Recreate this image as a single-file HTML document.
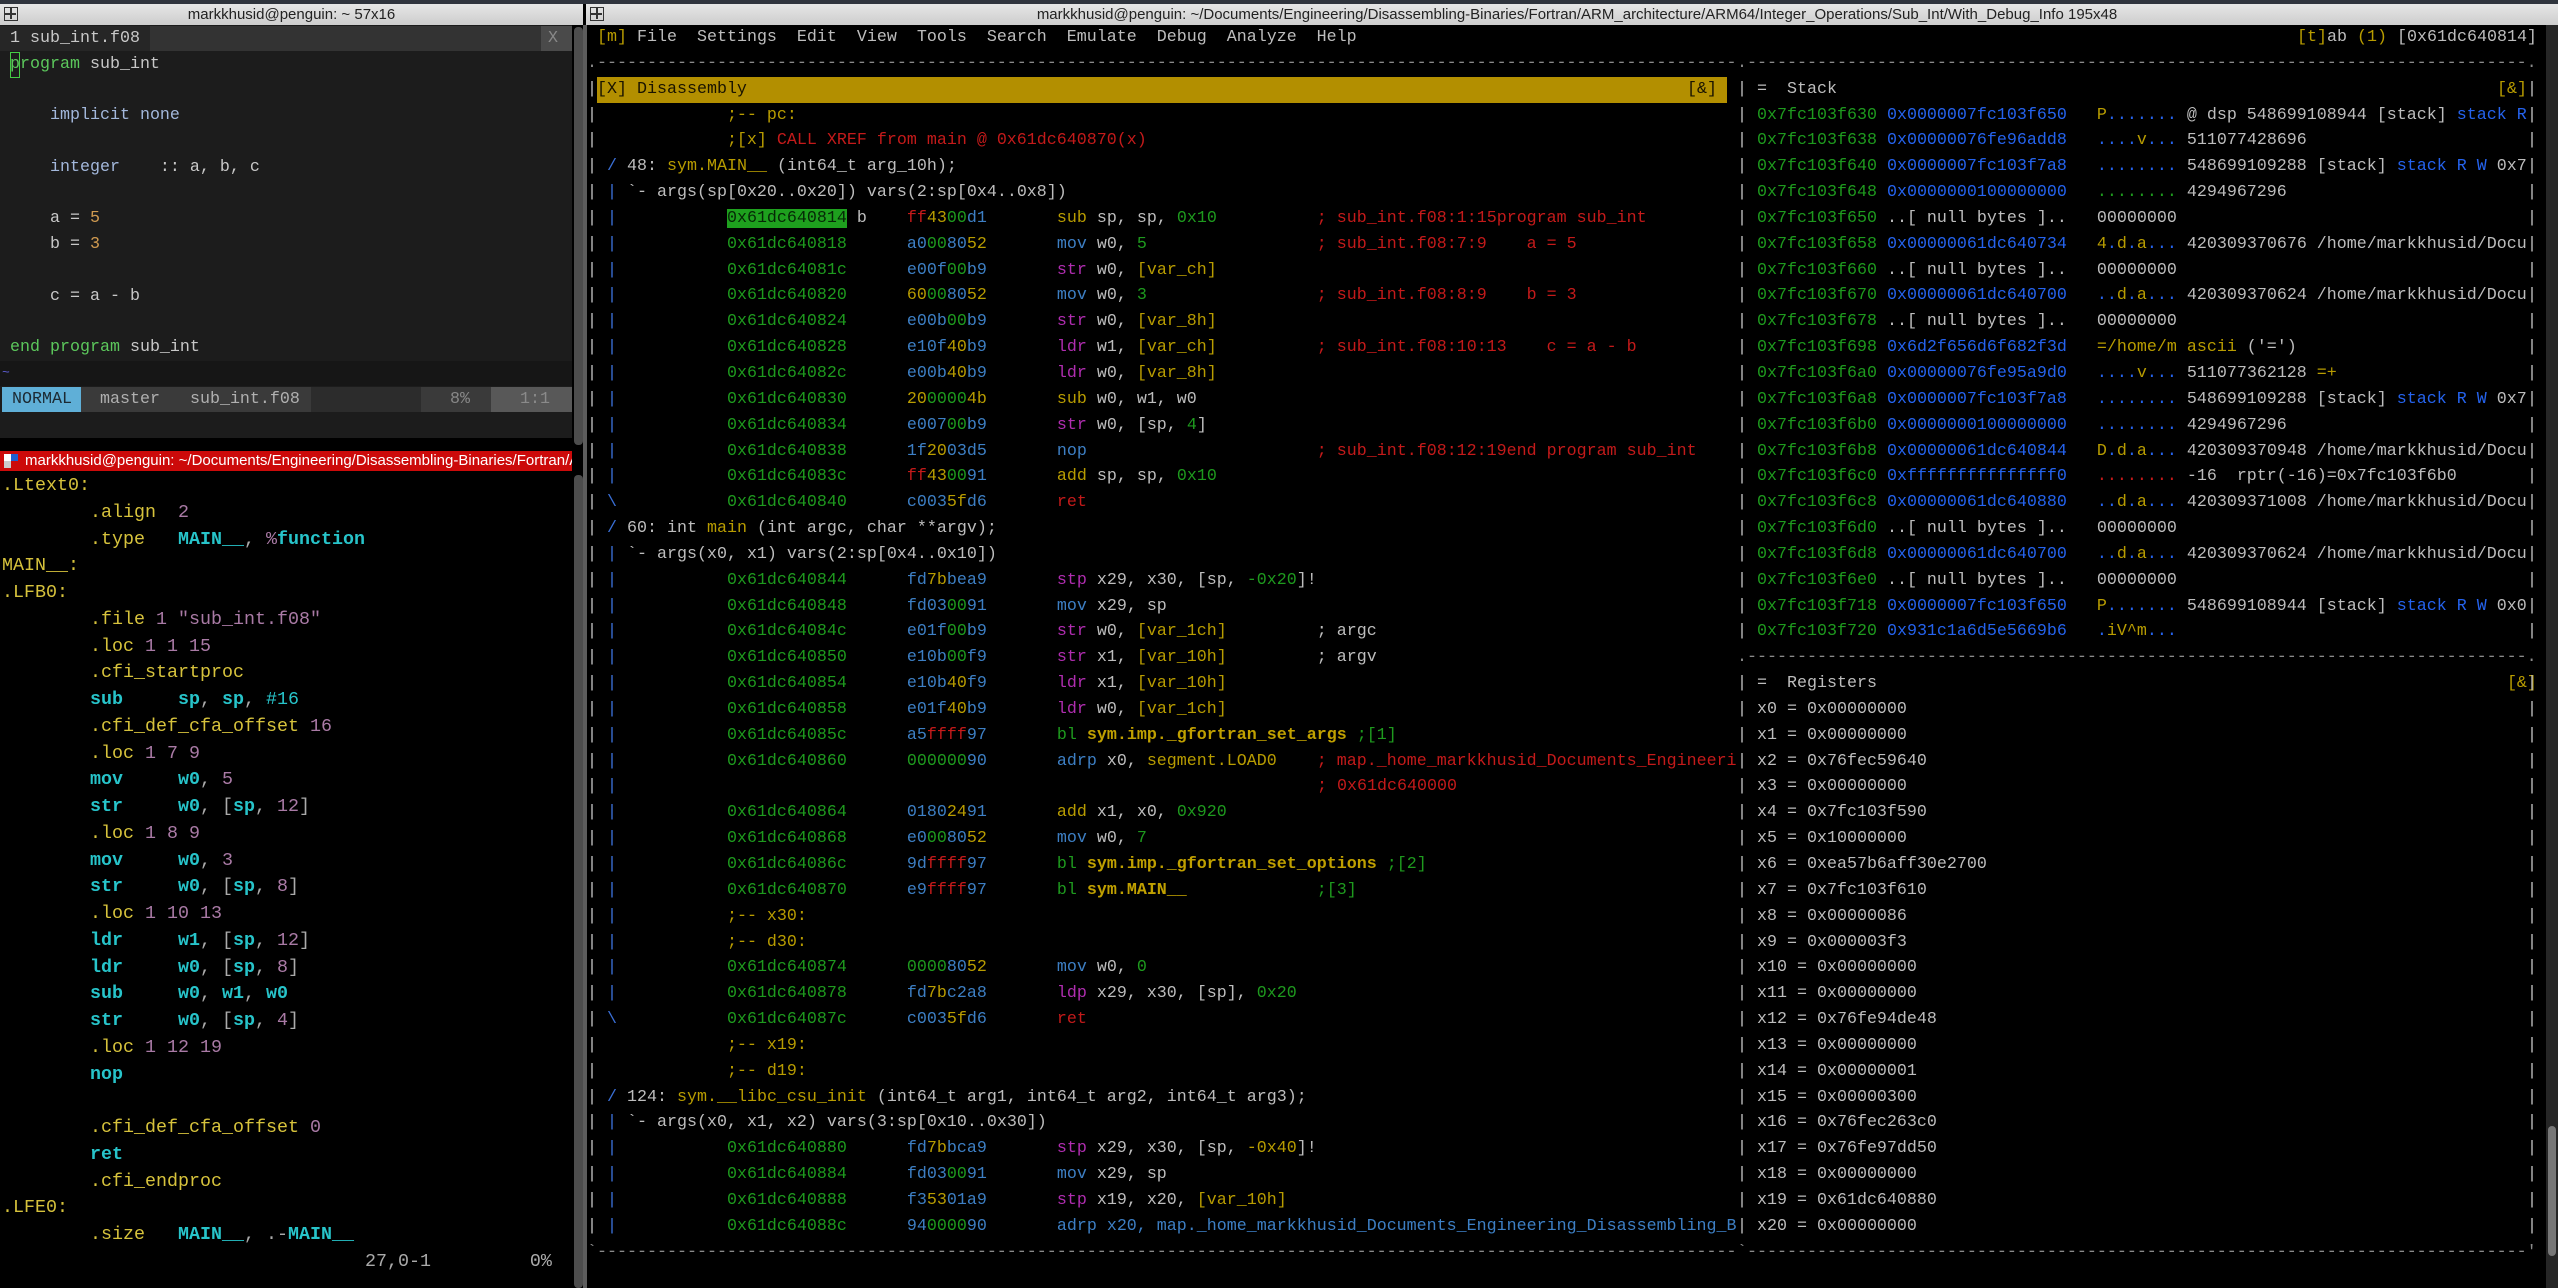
<!DOCTYPE html>
<html><head><meta charset="utf-8">
<style>
*{margin:0;padding:0;box-sizing:border-box}
body{width:2558px;height:1288px;background:#000;position:relative;overflow:hidden;font-family:"Liberation Mono",monospace}
.abs{position:absolute}
pre{position:absolute;white-space:pre;margin:0}
.r{font:16.667px/25.85px "Liberation Mono",monospace;color:#bdbdbd}
.g{color:#1e9a1e}.y{color:#b89c00}.b{color:#3d7fc4}.m{color:#b02db0}.rd{color:#c41a1a}
.bb{color:#2563ee}.i{color:#3a6fd6}.yb{color:#c0a000;font-weight:bold}.dk{color:#8a8a8a}
.hl{background:#1ea01e;color:#062806}
.bar{display:inline-block;width:1130px;background:#b38f00;color:#1a1400;position:relative}
.sp{display:inline-block}
.title{position:absolute;top:4px;height:21px;background:linear-gradient(#e6e6e6,#cdcdcd);font:15px/21px "Liberation Sans",sans-serif;color:#222;text-align:center;overflow:hidden;white-space:nowrap}
.ico{position:absolute;left:4px;top:3px;width:14px;height:14px;border:1.5px solid #333}
.ico:before{content:"";position:absolute;left:5px;top:0;width:1.5px;height:11px;background:#333}
.ico:after{content:"";position:absolute;left:0;top:5px;width:11px;height:1.5px;background:#333}
.v{font:16.667px/25.75px "Liberation Mono",monospace;color:#c8c8c8}
.vg{color:#5cc85c}.vl{color:#a3b8dc}.vo{color:#d09a50}
.a{font:18.33px/26.75px "Liberation Mono",monospace;color:#aaa}
.ay{color:#d6c23c}.ac{color:#27c4ca;font-weight:bold}.ap{color:#a97aa5}
</style></head><body>
<div class="abs" style="left:0;top:0;width:2558px;height:4px;background:#2f343d"></div>
<div class="title" style="left:0;width:583px"><div class="ico"></div>markkhusid@penguin: ~ 57x16</div>
<div class="title" style="left:586px;width:1972px"><div class="ico"></div><span style="padding-left:10px">markkhusid@penguin: ~/Documents/Engineering/Disassembling-Binaries/Fortran/ARM_architecture/ARM64/Integer_Operations/Sub_Int/With_Debug_Info 195x48</span></div>

<!-- left top vim -->
<div class="abs" style="left:0;top:25px;width:572px;height:413px;background:#1c1c1c"></div>
<div class="abs" style="left:0;top:26px;width:572px;height:25px;background:#333"></div>
<div class="abs" style="left:0;top:26px;width:150px;height:25px;background:#262626"></div>
<div class="abs" style="left:541px;top:26px;width:31px;height:25px;background:#4a4a4a"></div>
<div class="abs" style="left:0;top:361px;width:572px;height:25px;background:#161616"></div>
<div class="abs" style="left:2px;top:387px;width:79px;height:25px;background:#5fafd7"></div>
<div class="abs" style="left:81px;top:387px;width:230px;height:25px;background:#3a3a3a"></div>
<div class="abs" style="left:311px;top:387px;width:110px;height:25px;background:#2c2c2c"></div>
<div class="abs" style="left:421px;top:387px;width:70px;height:25px;background:#3a3a3a"></div>
<div class="abs" style="left:491px;top:387px;width:81px;height:25px;background:#585858"></div>
<div class="abs" style="left:10px;top:52px;width:10px;height:26px;border:1px solid #4c4"></div>
<pre class="v" style="left:10px;top:26px"><span style="color:#c8c8c8">1 sub_int.f08</span><span class="sp" style="width:408px"></span><span style="color:#888">X</span>
<span class="vg">program</span> sub_int

    <span class="vl">implicit none</span>

    <span class="vl">integer</span>    :: a, b, c

    a = <span class="vo">5</span>
    b = <span class="vo">3</span>

    c = a - b

<span class="vg">end program</span> sub_int</pre>
<pre class="v" style="left:2px;top:360px;color:#5f5fd7;font-size:13px">~</pre>
<pre class="v" style="left:12px;top:387px;color:#1c2a33">NORMAL</pre>
<pre class="v" style="left:100px;top:387px;color:#b0b0b0">master   sub_int.f08</pre>
<pre class="v" style="left:450px;top:387px;color:#888">8%</pre>
<pre class="v" style="left:520px;top:387px;color:#8a8a8a">1:1</pre>

<!-- scrollbars / divider -->
<div class="abs" style="left:574px;top:27px;width:9px;height:418px;background:#4d4d4d;border-radius:4px"></div>
<div class="abs" style="left:574px;top:475px;width:9px;height:813px;background:#4d4d4d;border-radius:4px"></div>
<div class="abs" style="left:583px;top:25px;width:4px;height:1263px;background:#5d5d5d"></div>
<div class="abs" style="left:2546px;top:25px;width:12px;height:1263px;background:#262626"></div>
<div class="abs" style="left:2548px;top:1126px;width:8px;height:130px;background:#777;border-radius:4px"></div>

<!-- left bottom -->
<div class="abs" style="left:0;top:451px;width:572px;height:20px;background:#cc0a0a;overflow:hidden;font:15px/20px 'Liberation Sans',sans-serif;color:#fff;white-space:nowrap"><span class="abs" style="left:4px;top:3px;width:7px;height:7px;background:#fff"></span><span class="abs" style="left:11px;top:3px;width:7px;height:7px;background:#1f5fd0"></span><span class="abs" style="left:4px;top:10px;width:7px;height:7px;background:#ccc"></span><span style="padding-left:25px">markkhusid@penguin: ~/Documents/Engineering/Disassembling-Binaries/Fortran/AR</span></div>
<pre class="a" style="left:2px;top:473px"><span class="ay">.Ltext0:</span>
        <span class="ay">.align</span>  <span class="ap">2</span>
        <span class="ay">.type</span>   <span class="ac">MAIN__</span>, <span class="ap">%</span><span class="ac">function</span>
<span class="ay">MAIN__:</span>
<span class="ay">.LFB0:</span>
        <span class="ay">.file</span> <span class="ap">1 "sub_int.f08"</span>
        <span class="ay">.loc</span> <span class="ap">1 1 15</span>
        <span class="ay">.cfi_startproc</span>
        <span class="ac">sub</span>     <span class="ac">sp</span>, <span class="ac">sp</span>, <span class="ac" style="font-weight:normal">#16</span>
        <span class="ay">.cfi_def_cfa_offset</span> <span class="ap">16</span>
        <span class="ay">.loc</span> <span class="ap">1 7 9</span>
        <span class="ac">mov</span>     <span class="ac">w0</span>, <span class="ap">5</span>
        <span class="ac">str</span>     <span class="ac">w0</span>, [<span class="ac">sp</span>, <span class="ap">12</span>]
        <span class="ay">.loc</span> <span class="ap">1 8 9</span>
        <span class="ac">mov</span>     <span class="ac">w0</span>, <span class="ap">3</span>
        <span class="ac">str</span>     <span class="ac">w0</span>, [<span class="ac">sp</span>, <span class="ap">8</span>]
        <span class="ay">.loc</span> <span class="ap">1 10 13</span>
        <span class="ac">ldr</span>     <span class="ac">w1</span>, [<span class="ac">sp</span>, <span class="ap">12</span>]
        <span class="ac">ldr</span>     <span class="ac">w0</span>, [<span class="ac">sp</span>, <span class="ap">8</span>]
        <span class="ac">sub</span>     <span class="ac">w0</span>, <span class="ac">w1</span>, <span class="ac">w0</span>
        <span class="ac">str</span>     <span class="ac">w0</span>, [<span class="ac">sp</span>, <span class="ap">4</span>]
        <span class="ay">.loc</span> <span class="ap">1 12 19</span>
        <span class="ac">nop</span>

        <span class="ay">.cfi_def_cfa_offset</span> <span class="ap">0</span>
        <span class="ac">ret</span>
        <span class="ay">.cfi_endproc</span>
<span class="ay">.LFE0:</span>
        <span class="ay">.size</span>   <span class="ac">MAIN__</span>, .-<span class="ac">MAIN__</span>
                                 27,0-1         0%</pre>

<!-- right terminal: disassembly -->
<pre class="r" style="left:587px;top:25px"> <span class="y">[m]</span> File  Settings  Edit  View  Tools  Search  Emulate  Debug  Analyze  Help
<span class="dk">.------------------------------------------------------------------------------------------------------------------</span>
|<span class="bar">[X] Disassembly<span style="position:absolute;left:1090px">[&amp;]</span></span>
|             <span class="y">;-- pc:</span>
|             <span class="y">;[x]</span><span class="rd"> CALL XREF from main @ 0x61dc640870(x)</span>
| <span class="i">/</span> 48: <span class="y">sym.MAIN__</span> (int64_t arg_10h);
| <span class="i">|</span> `- args(sp[0x20..0x20]) vars(2:sp[0x4..0x8])
| <span class="i">|</span>           <span class="hl">0x61dc640814</span> b    <span class="rd">ff</span><span class="y">43</span><span class="g">00</span><span class="b">d1</span>       <span class="y">sub</span> sp, sp, <span class="g">0x10</span>          <span class="rd">; sub_int.f08:1:15program sub_int</span>
| <span class="i">|</span>           <span class="g">0x61dc640818</span>      <span class="b">a0</span><span class="g">00</span><span class="b">80</span><span class="y">52</span>       <span class="b">mov</span> w0, <span class="g">5</span>                 <span class="rd">; sub_int.f08:7:9    a = 5</span>
| <span class="i">|</span>           <span class="g">0x61dc64081c</span>      <span class="b">e00f</span><span class="g">00</span><span class="b">b9</span>       <span class="m">str</span> w0, <span class="y">[var_ch]</span>
| <span class="i">|</span>           <span class="g">0x61dc640820</span>      <span class="y">60</span><span class="g">00</span><span class="b">80</span><span class="y">52</span>       <span class="b">mov</span> w0, <span class="g">3</span>                 <span class="rd">; sub_int.f08:8:9    b = 3</span>
| <span class="i">|</span>           <span class="g">0x61dc640824</span>      <span class="b">e00b</span><span class="g">00</span><span class="b">b9</span>       <span class="m">str</span> w0, <span class="y">[var_8h]</span>
| <span class="i">|</span>           <span class="g">0x61dc640828</span>      <span class="b">e10f</span><span class="y">40</span><span class="b">b9</span>       <span class="m">ldr</span> w1, <span class="y">[var_ch]</span>          <span class="rd">; sub_int.f08:10:13    c = a - b</span>
| <span class="i">|</span>           <span class="g">0x61dc64082c</span>      <span class="b">e00b</span><span class="y">40</span><span class="b">b9</span>       <span class="m">ldr</span> w0, <span class="y">[var_8h]</span>
| <span class="i">|</span>           <span class="g">0x61dc640830</span>      <span class="y">20</span><span class="g">0000</span><span class="y">4b</span>       <span class="y">sub</span> w0, w1, w0
| <span class="i">|</span>           <span class="g">0x61dc640834</span>      <span class="b">e007</span><span class="g">00</span><span class="b">b9</span>       <span class="m">str</span> w0, [sp, <span class="g">4</span>]
| <span class="i">|</span>           <span class="g">0x61dc640838</span>      <span class="b">1f</span><span class="y">20</span><span class="b">03d5</span>       <span class="b">nop</span>                       <span class="rd">; sub_int.f08:12:19end program sub_int</span>
| <span class="i">|</span>           <span class="g">0x61dc64083c</span>      <span class="rd">ff</span><span class="y">43</span><span class="g">00</span><span class="b">91</span>       <span class="y">add</span> sp, sp, <span class="g">0x10</span>
| <span class="i">\</span>           <span class="g">0x61dc640840</span>      <span class="b">c003</span><span class="y">5f</span><span class="b">d6</span>       <span class="rd">ret</span>
| <span class="i">/</span> 60: int <span class="y">main</span> (int argc, char **argv);
| <span class="i">|</span> `- args(x0, x1) vars(2:sp[0x4..0x10])
| <span class="i">|</span>           <span class="g">0x61dc640844</span>      <span class="b">fd</span><span class="y">7b</span><span class="b">bea9</span>       <span class="m">stp</span> x29, x30, [sp, <span class="g">-0x20</span>]!
| <span class="i">|</span>           <span class="g">0x61dc640848</span>      <span class="b">fd03</span><span class="g">00</span><span class="b">91</span>       <span class="b">mov</span> x29, sp
| <span class="i">|</span>           <span class="g">0x61dc64084c</span>      <span class="b">e01f</span><span class="g">00</span><span class="b">b9</span>       <span class="m">str</span> w0, <span class="y">[var_1ch]</span>         ; argc
| <span class="i">|</span>           <span class="g">0x61dc640850</span>      <span class="b">e10b</span><span class="g">00</span><span class="b">f9</span>       <span class="m">str</span> x1, <span class="y">[var_10h]</span>         ; argv
| <span class="i">|</span>           <span class="g">0x61dc640854</span>      <span class="b">e10b</span><span class="y">40</span><span class="b">f9</span>       <span class="m">ldr</span> x1, <span class="y">[var_10h]</span>
| <span class="i">|</span>           <span class="g">0x61dc640858</span>      <span class="b">e01f</span><span class="y">40</span><span class="b">b9</span>       <span class="m">ldr</span> w0, <span class="y">[var_1ch]</span>
| <span class="i">|</span>           <span class="g">0x61dc64085c</span>      <span class="b">a5</span><span class="rd">ffff</span><span class="b">97</span>       <span class="g">bl</span> <span class="yb">sym.imp._gfortran_set_args</span> <span class="g">;[1]</span>
| <span class="i">|</span>           <span class="g">0x61dc640860</span>      <span class="g">000000</span><span class="b">90</span>       <span class="b">adrp</span> x0, <span class="y">segment.LOAD0</span>    <span class="rd">; map._home_markkhusid_Documents_Engineeri</span>
| <span class="i">|</span><span class="sp" style="width:700px"></span><span class="rd">; 0x61dc640000</span>
| <span class="i">|</span>           <span class="g">0x61dc640864</span>      <span class="b">0180</span><span class="y">24</span><span class="b">91</span>       <span class="y">add</span> x1, x0, <span class="g">0x920</span>
| <span class="i">|</span>           <span class="g">0x61dc640868</span>      <span class="b">e0</span><span class="g">00</span><span class="b">80</span><span class="y">52</span>       <span class="b">mov</span> w0, <span class="g">7</span>
| <span class="i">|</span>           <span class="g">0x61dc64086c</span>      <span class="b">9d</span><span class="rd">ffff</span><span class="b">97</span>       <span class="g">bl</span> <span class="yb">sym.imp._gfortran_set_options</span> <span class="g">;[2]</span>
| <span class="i">|</span>           <span class="g">0x61dc640870</span>      <span class="b">e9</span><span class="rd">ffff</span><span class="b">97</span>       <span class="g">bl</span> <span class="yb">sym.MAIN__</span>             <span class="g">;[3]</span>
| <span class="i">|</span>           <span class="y">;-- x30:</span>
| <span class="i">|</span>           <span class="y">;-- d30:</span>
| <span class="i">|</span>           <span class="g">0x61dc640874</span>      <span class="g">0000</span><span class="b">80</span><span class="y">52</span>       <span class="b">mov</span> w0, <span class="g">0</span>
| <span class="i">|</span>           <span class="g">0x61dc640878</span>      <span class="b">fd</span><span class="y">7b</span><span class="b">c2a8</span>       <span class="m">ldp</span> x29, x30, [sp], <span class="g">0x20</span>
| <span class="i">\</span>           <span class="g">0x61dc64087c</span>      <span class="b">c003</span><span class="y">5f</span><span class="b">d6</span>       <span class="rd">ret</span>
|             <span class="y">;-- x19:</span>
|             <span class="y">;-- d19:</span>
| <span class="i">/</span> 124: <span class="y">sym.__libc_csu_init</span> (int64_t arg1, int64_t arg2, int64_t arg3);
| <span class="i">|</span> `- args(x0, x1, x2) vars(3:sp[0x10..0x30])
| <span class="i">|</span>           <span class="g">0x61dc640880</span>      <span class="b">fd</span><span class="y">7b</span><span class="b">bca9</span>       <span class="m">stp</span> x29, x30, [sp, <span class="y">-0x40</span>]!
| <span class="i">|</span>           <span class="g">0x61dc640884</span>      <span class="b">fd03</span><span class="g">00</span><span class="b">91</span>       <span class="b">mov</span> x29, sp
| <span class="i">|</span>           <span class="g">0x61dc640888</span>      <span class="b">f3</span><span class="y">53</span><span class="b">01a9</span>       <span class="m">stp</span> x19, x20, <span class="y">[var_10h]</span>
| <span class="i">|</span>           <span class="g">0x61dc64088c</span>      <span class="b">94</span><span class="g">0000</span><span class="b">90</span>       <span class="b">adrp x20, map._home_markkhusid_Documents_Engineering_Disassembling_B</span>
<span class="dk">`------------------------------------------------------------------------------------------------------------------</span></pre>

<pre class="r" style="left:2297px;top:25px"><span class="y">[t]</span>ab <span class="y">(1)</span> [0x61dc640814]</pre>

<!-- stack & registers -->
<pre class="r" style="left:1737px;top:50.85px"><span class="dk">.------------------------------------------------------------------------------.</span>
| =  Stack<span class="sp" style="width:660px"></span><span class="y">[&amp;]</span>
| <span class="g">0x7fc103f630</span> <span class="bb">0x0000007fc103f650</span>   <span class="y">P</span><span class="bb">.......</span> @ dsp 548699108944 [stack] <span class="bb">stack R</span>
| <span class="g">0x7fc103f638</span> <span class="bb">0x00000076fe96add8</span>   <span class="bb">....</span><span class="y">v</span><span class="bb">...</span> 511077428696
| <span class="g">0x7fc103f640</span> <span class="bb">0x0000007fc103f7a8</span>   <span class="bb">........</span> 548699109288 [stack] <span class="bb">stack R W</span> 0x7
| <span class="g">0x7fc103f648</span> <span class="bb">0x0000000100000000</span>   <span class="g">........</span> 4294967296
| <span class="g">0x7fc103f650</span> ..[ null bytes ]..   00000000
| <span class="g">0x7fc103f658</span> <span class="bb">0x00000061dc640734</span>   <span class="y">4</span><span class="bb">.</span><span class="y">d</span><span class="bb">.</span><span class="y">a</span><span class="bb">...</span> 420309370676 /home/markkhusid/Docu
| <span class="g">0x7fc103f660</span> ..[ null bytes ]..   00000000
| <span class="g">0x7fc103f670</span> <span class="bb">0x00000061dc640700</span>   <span class="bb">..</span><span class="y">d</span><span class="bb">.</span><span class="y">a</span><span class="bb">...</span> 420309370624 /home/markkhusid/Docu
| <span class="g">0x7fc103f678</span> ..[ null bytes ]..   00000000
| <span class="g">0x7fc103f698</span> <span class="bb">0x6d2f656d6f682f3d</span>   <span class="y">=/home/m ascii</span> ('=')
| <span class="g">0x7fc103f6a0</span> <span class="bb">0x00000076fe95a9d0</span>   <span class="bb">....</span><span class="y">v</span><span class="bb">...</span> 511077362128 <span class="y">=+</span>
| <span class="g">0x7fc103f6a8</span> <span class="bb">0x0000007fc103f7a8</span>   <span class="bb">........</span> 548699109288 [stack] <span class="bb">stack R W</span> 0x7
| <span class="g">0x7fc103f6b0</span> <span class="bb">0x0000000100000000</span>   <span class="bb">........</span> 4294967296
| <span class="g">0x7fc103f6b8</span> <span class="bb">0x00000061dc640844</span>   <span class="y">D</span><span class="bb">.</span><span class="y">d</span><span class="bb">.</span><span class="y">a</span><span class="bb">...</span> 420309370948 /home/markkhusid/Docu
| <span class="g">0x7fc103f6c0</span> <span class="bb">0xfffffffffffffff0</span>   <span class="rd">........</span> -16  rptr(-16)=0x7fc103f6b0
| <span class="g">0x7fc103f6c8</span> <span class="bb">0x00000061dc640880</span>   <span class="bb">..</span><span class="y">d</span><span class="bb">.</span><span class="y">a</span><span class="bb">...</span> 420309371008 /home/markkhusid/Docu
| <span class="g">0x7fc103f6d0</span> ..[ null bytes ]..   00000000
| <span class="g">0x7fc103f6d8</span> <span class="bb">0x00000061dc640700</span>   <span class="bb">..</span><span class="y">d</span><span class="bb">.</span><span class="y">a</span><span class="bb">...</span> 420309370624 /home/markkhusid/Docu
| <span class="g">0x7fc103f6e0</span> ..[ null bytes ]..   00000000
| <span class="g">0x7fc103f718</span> <span class="bb">0x0000007fc103f650</span>   <span class="y">P</span><span class="bb">.......</span> 548699108944 [stack] <span class="bb">stack R W</span> 0x0
| <span class="g">0x7fc103f720</span> <span class="bb">0x931c1a6d5e5669b6</span>   <span class="bb">.</span><span class="y">iV^m</span><span class="bb">...</span>
<span class="dk">.------------------------------------------------------------------------------.</span>
| =  Registers<span class="sp" style="width:630px"></span><span class="y">[&amp;]</span>
| x0 = 0x00000000
| x1 = 0x00000000
| x2 = 0x76fec59640
| x3 = 0x00000000
| x4 = 0x7fc103f590
| x5 = 0x10000000
| x6 = 0xea57b6aff30e2700
| x7 = 0x7fc103f610
| x8 = 0x00000086
| x9 = 0x000003f3
| x10 = 0x00000000
| x11 = 0x00000000
| x12 = 0x76fe94de48
| x13 = 0x00000000
| x14 = 0x00000001
| x15 = 0x00000300
| x16 = 0x76fec263c0
| x17 = 0x76fe97dd50
| x18 = 0x00000000
| x19 = 0x61dc640880
| x20 = 0x00000000
<span class="dk">`------------------------------------------------------------------------------'</span></pre>

<pre class="r" style="left:2527px;top:76.7px">|
|
|
|
|
|
|
|
|
|
|
|
|
|
|
|
|
|
|
|
|
|

|
|
|
|
|
|
|
|
|
|
|
|
|
|
|
|
|
|
|
|
|
|</pre>
</body></html>
